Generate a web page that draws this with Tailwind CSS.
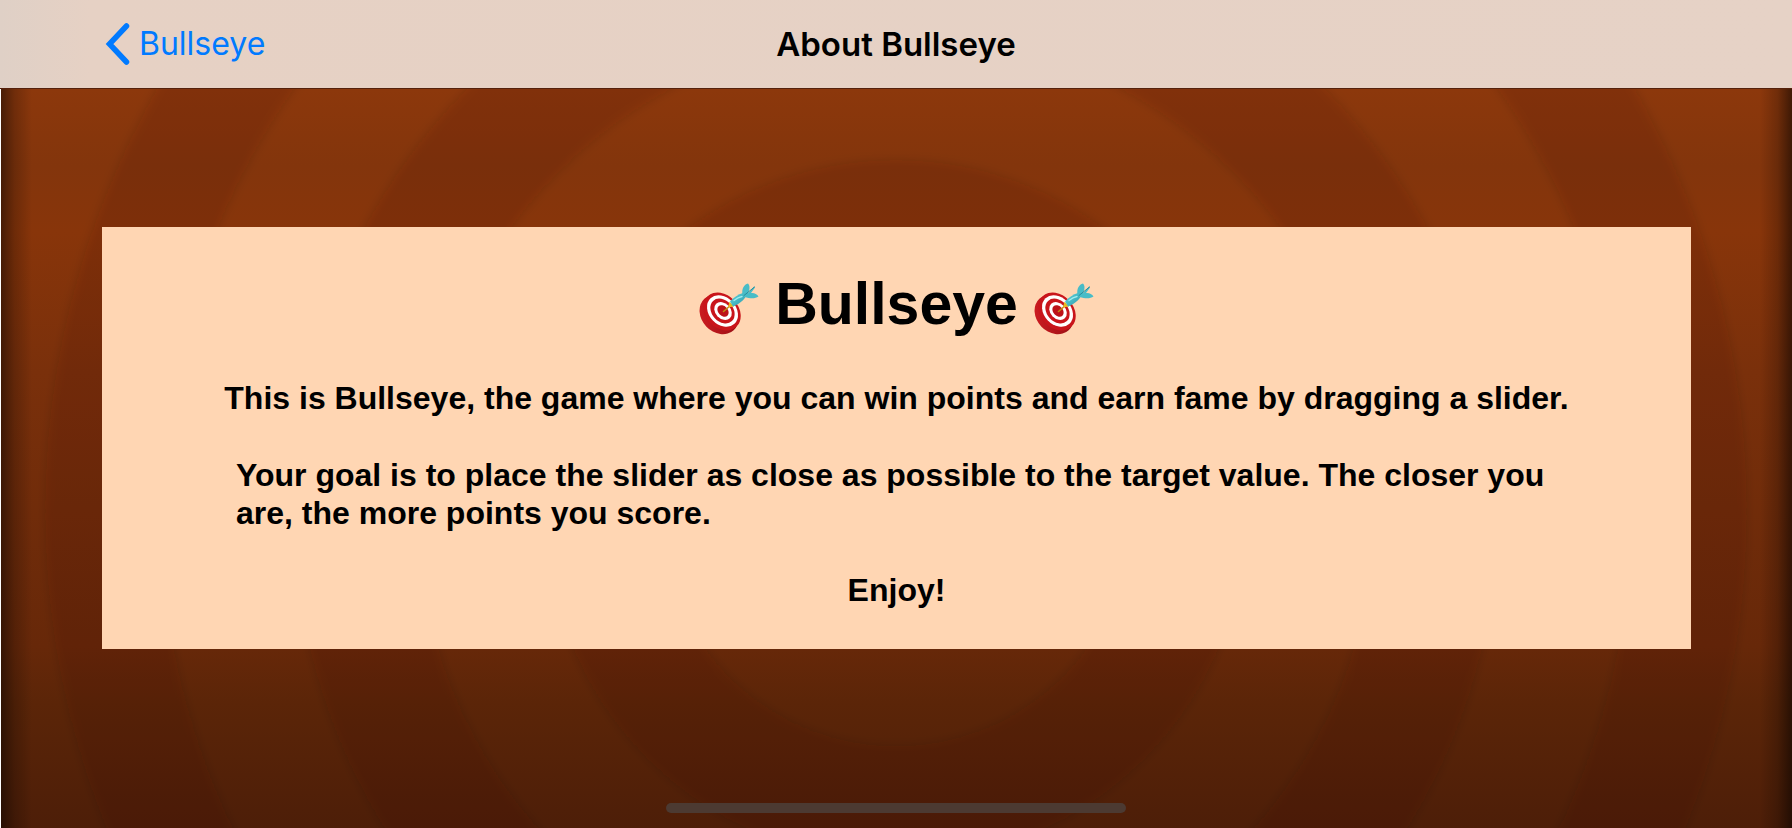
<!DOCTYPE html>
<html lang="en">
<head>
<meta charset="utf-8">
<meta name="viewport" content="width=device-width, initial-scale=1">
<title>About Bullseye</title>
<script src="https://cdn.jsdelivr.net/npm/@tailwindcss/browser@4"></script>
</head>
<body class="relative isolate flex min-h-screen flex-col overflow-x-hidden bg-[#441a04] text-black">
  <!-- Wooden target backdrop -->
  <svg class="absolute inset-0 -z-10 h-full w-full" viewBox="0 0 1792 828" preserveAspectRatio="none" aria-hidden="true">
    <defs>
      <linearGradient id="wood" x1="0" y1="0" x2="0" y2="1">
        <stop offset="0.1" stop-color="#8d380c"/>
        <stop offset="0.2" stop-color="#83350c"/>
        <stop offset="0.28" stop-color="#88350a"/>
        <stop offset="0.45" stop-color="#7a300b"/>
        <stop offset="0.78" stop-color="#672809"/>
        <stop offset="0.85" stop-color="#5b2508"/>
        <stop offset="1" stop-color="#4d1e08"/>
      </linearGradient>
      <linearGradient id="edgeL"><stop offset="0" stop-opacity="0.5"/><stop offset="0.45" stop-opacity="0.2"/><stop offset="1" stop-opacity="0"/></linearGradient>
      <linearGradient id="edgeR" x1="1" x2="0"><stop offset="0" stop-opacity="0.55"/><stop offset="0.45" stop-opacity="0.2"/><stop offset="1" stop-opacity="0"/></linearGradient>
      <filter id="soft"><feGaussianBlur stdDeviation="5"/></filter>
    </defs>
    <rect width="1792" height="828" fill="url(#wood)"/>
    <g fill="none" stroke="#280800" stroke-opacity="0.12" filter="url(#soft)">
      <circle cx="896" cy="511" r="293" stroke-width="116"/>
      <circle cx="896" cy="511" r="540" stroke-width="124"/>
      <circle cx="896" cy="511" r="793" stroke-width="116"/>
    </g>
    <rect width="32" height="828" fill="url(#edgeL)"/>
    <rect x="1760" width="32" height="828" fill="url(#edgeR)"/>
    <rect y="88" width="1" height="740" fill="#ffffff"/>
  </svg>

  <!-- Dart board symbol, used on both sides of the heading -->
  <svg class="absolute h-0 w-0" aria-hidden="true">
    <defs>
      <linearGradient id="rim" x1="0" y1="0" x2="1" y2="1"><stop offset="0" stop-color="#d51d22"/><stop offset="1" stop-color="#8d0d12"/></linearGradient>
      <linearGradient id="dart" x1="0" y1="0" x2="1" y2="1"><stop offset="0" stop-color="#62d5dc"/><stop offset="1" stop-color="#2c9bac"/></linearGradient>
      <symbol id="board" viewBox="0 0 60 52">
        <ellipse cx="20" cy="31.500" rx="17.500" ry="21.500" transform="rotate(-43 20 31.5)" fill="url(#rim)"/>
        <ellipse cx="23" cy="28.500" rx="16.500" ry="21" transform="rotate(-43 23 28.5)" fill="#c9151b"/>
        <ellipse cx="23.5" cy="28" rx="13.5" ry="17.5" transform="rotate(-43 23.5 28)" fill="#fff"/>
        <ellipse cx="23.5" cy="28" rx="10.5" ry="13.8" transform="rotate(-43 23.5 28)" fill="#c9151b"/>
        <ellipse cx="24" cy="28" rx="7.6" ry="10" transform="rotate(-43 24 28)" fill="#fff"/>
        <ellipse cx="24" cy="28" rx="4.8" ry="6.5" transform="rotate(-43 24 28)" fill="#bd1218"/>
        <path d="M24.500 28.500 L32 22" stroke="#c08a12" stroke-width="1.600" stroke-linecap="round"/>
        <path d="M29 24.500 L30.500 18.500 L35 23.500 Z" fill="#e8b923"/>
        <path d="M31 18.500 C35 14 39 11.500 44 10 L46.500 14 C44 18 39 21.500 34 23.500 Z" fill="url(#dart)"/>
        <path d="M43.500 11.500 C42.500 6 45 1.500 49 .5 C51.500 3 50.500 7 49 10.500 L55 3.500 L56 4.500 L52 10 C55 9.500 58 11 59.500 13.500 C56 16 51 15.500 45.500 14 Z" fill="#48bcc7"/>
        <path d="M45 12.500 L55.500 4" stroke="#278c9b" stroke-width="1" stroke-linecap="round"/>
        <path d="M35 17.500 C38 15 40 14 43 13.500" fill="none" stroke="#a0edf0" stroke-width="1.300" stroke-linecap="round"/>
      </symbol>
    </defs>
  </svg>

  <header class="grid h-[89px] shrink-0 grid-cols-3 items-center border-b border-[#54210c] bg-linear-to-r from-[#dfd0c6] via-[#e6d1c4] via-5% to-[#e6d2c6] px-[104px] font-['Inter',sans-serif] text-[33px] leading-10">
    <a href="#" class="flex items-center gap-[7px] justify-self-start text-[32px] text-[#007aff]">
      <svg class="h-11 w-7" viewBox="0 0 28 44" fill="none" stroke="currentColor" stroke-width="5.500" stroke-linecap="round" stroke-linejoin="miter" aria-hidden="true"><path d="M22.500 4 5.500 22l17 18"/></svg>
      <span>Bullseye</span>
    </a>
    <h1 class="justify-self-center font-semibold whitespace-nowrap">About Bullseye</h1>
  </header>

  <main class="mr-[101px] ml-[102px] mt-[138px] flex flex-col items-center gap-[39px] bg-[#ffd6b3] pt-[42px] pb-10 font-['Liberation_Sans',sans-serif] text-[32px] leading-[38px] font-bold">
    <h2 class="flex items-center justify-center gap-4 text-[59px] leading-[71px]">
      <svg class="mt-2 h-[52px] w-[60px]" aria-hidden="true"><use href="#board"/></svg>
      <span>Bullseye</span>
      <svg class="mt-2 h-[52px] w-[60px]" aria-hidden="true"><use href="#board"/></svg>
    </h2>
    <p class="text-center">This is Bullseye, the game where you can win points and earn fame by dragging a slider.</p>
    <p class="w-full px-[134px]">Your goal is to place the slider as close as possible to the target value. The closer you are, the more points you score.</p>
    <p>Enjoy!</p>
  </main>

  <div class="mx-auto mt-auto mb-[15px] h-2.5 w-[460px] rounded-full bg-[#4c3a32]" aria-hidden="true"></div>
</body>
</html>
